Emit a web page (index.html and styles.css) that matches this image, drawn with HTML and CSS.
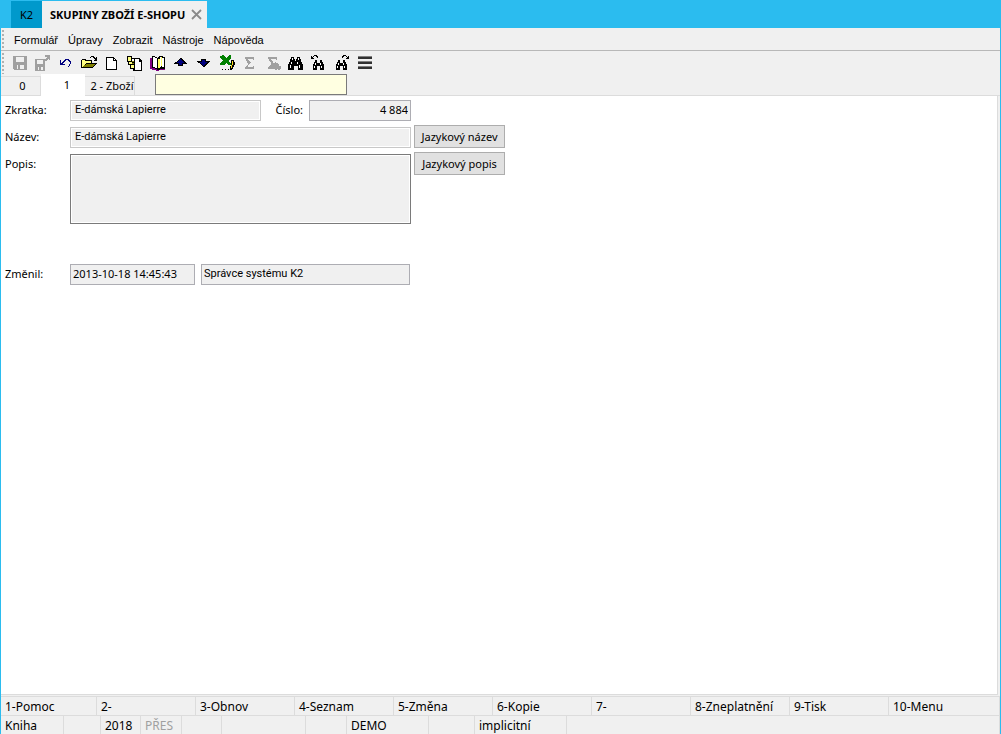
FILE: index.html
```html
<!DOCTYPE html>
<html lang="cs">
<head>
<meta charset="utf-8">
<title>K2 – Skupiny zboží e-shopu</title>
<link rel="stylesheet" href="styles.css">
</head>
<body>
<div class="window">
  <header class="titlebar">
    <button class="title-tab home" type="button">K2</button>
    <div class="title-tab current">
      <span>SKUPINY ZBOŽÍ E-SHOPU</span>
      <button class="close" type="button" aria-label="Zavřít"><svg width="11" height="11" viewBox="0 0 11 11"><path d="M1 1l9 9M10 1l-9 9" stroke="#8a8a8a" stroke-width="1.8" fill="none"/></svg></button>
    </div>
  </header>

  <nav class="menubar">
    <button type="button">Formulář</button>
    <button type="button">Úpravy</button>
    <button type="button">Zobrazit</button>
    <button type="button">Nástroje</button>
    <button type="button">Nápověda</button>
  </nav>

  <div class="toolbar">
    <button type="button" aria-label="Uložit"><svg viewBox="0 0 17 17"><path fill="#a0a0a0" d="M1 2h14v14H2l-1-1z"/><path fill="#f0f0f0" d="M4 3h8v5H4zM5 11h7v4H5z"/><path fill="#a0a0a0" d="M6 11h2v4H6z"/></svg></button>
    <button type="button" aria-label="Uložit a zavřít"><svg viewBox="0 0 17 17"><path fill="#a0a0a0" d="M0 5h10v12H0zM10 1h5v5h-1V5h-1v1h-1v1h-2V5h1V4h1V3h-2z"/><path fill="#f0f0f0" d="M2 6h6v4H2zM3 13h5v3H3z"/><path fill="#a0a0a0" d="M4 13h2v3H4z"/></svg></button>
    <button type="button" aria-label="Zpět"><svg viewBox="0 0 17 17"><path fill="#000080" d="M2 6h1v3h1V8h1V7h1V6h1V5h4v1h1v1h1v3h-1v2h-1v1h-1v-1h1v-2h1V8h-1V7h-1V6H8v1H7v1H6v1H5v1h2v1H2z"/></svg></button>
    <button type="button" aria-label="Otevřít"><svg viewBox="0 0 17 17"><path fill="#000" d="M9 3h1V2h3v1h1v1h1V3h1v4h-3V6h1V5h-1V4h-1V3h-2v1H9zM1 5h4v1h6v3h5v1h-1v1h-1v1h-1v1h-1v1H0V6h1z"/><path fill="#ffff80" d="M1 6h3v1h6v2H5v1H4v1H3v1H2v1H1z"/><path fill="#808000" d="M5 10h9v1h-1v1h-1v1H2v-1h1v-1h2z"/></svg></button>
    <button type="button" aria-label="Nový"><svg viewBox="0 0 17 17"><path fill="#000" d="M2 3h8v1h1v1h1v1h1v10H2z"/><path fill="#fff" d="M3 4h6v3h3v8H3zM10 5h1v1h-1z"/></svg></button>
    <button type="button" aria-label="Kopie"><svg viewBox="0 0 17 17"><path fill="#000" d="M0 2h5v2h8v1h1v1h1v11H6v-2H3v-4H1V8H0z"/><path fill="#ffff80" d="M1 3h3v4H1zM2 8h3v2H2zM4 11h3v3H4z"/><path fill="#fff" d="M5 5h2v2H5zM8 5h4v3h2v8H8z"/><path fill="#000" d="M7 5h1v3H7zM7 10h1v4H7z"/><path fill="#808000" d="M5 7h2v1H5zM5 9h2v1H5z"/></svg></button>
    <button type="button" aria-label="Kniha"><svg viewBox="0 0 17 17"><path fill="#800080" d="M0 4h2v9h5v1h2v-1h6v3H9v1H6v-1H2v-1H0z"/><path fill="#000" d="M2 2h3v1h2v1h1V3h1V2h4v1h2v12h-5v1H7v-1H5v-1H2z"/><path fill="#fff" d="M3 3h2v1h2v10H5v-1H3z"/><path fill="#ffff60" d="M8 5h2v9H8zM11 3h1v9h-1z"/><path fill="#fff" d="M10 3h1v10h-1zM12 4h2v9h-2z"/></svg></button>
    <button type="button" aria-label="Předchozí"><svg viewBox="0 0 17 17"><path fill="#000" d="M7 4h2v1h1v1h1v1h1v1h1v1h1v1h-4v2H5v-2H1V9h1V8h2V7h1V6h1V5h1z"/><path fill="#000080" d="M7 5h1v1h1v1h1v1h1v1H9v2H6V9H4V8h1V7h1V6h1z"/></svg></button>
    <button type="button" aria-label="Další"><svg viewBox="0 0 17 17"><path fill="#000" d="M5 5h5v2h4v1h-1v1h-1v1h-1v1h-1v1H9v1H7v-1H6v-1H5v-1H4V9H2V8H1V7h4z"/><path fill="#000080" d="M6 6h3v2h2v1h-1v1H9v1H8v1H7v-1H6v-1H5V9H4V8h2z"/></svg></button>
    <button type="button" aria-label="Export do Excelu"><svg viewBox="0 0 17 17"><path fill="#008000" d="M1 2l4-1 2 3 3-3h2v3L9 7l3 2v2H9L7 9l-2 2H1V9l3-2-3-3z"/><path fill="#000" d="M3 15h1v1H3zM6 15h1v1H6zM9 15h1v1H9zM12 6h3v2h1v3h-1v2h-1v2h-1v1h-2v-4h1z"/><path fill="#ffe020" d="M13 7h1v4h-1v3h-1v-3h1z"/></svg></button>
    <button type="button" aria-label="Součet"><svg viewBox="0 0 17 17"><path fill="#a0a0a0" d="M3 3h9v3h-1V5H6v1h1v1h1v1h1v1H8v1H7v1H6v2h5v-1h1v3H3v-2h1v-1h1v-1h1V9H5V7H4V5H3z"/></svg></button>
    <button type="button" aria-label="Součet označených"><svg viewBox="0 0 17 17"><path fill="#a0a0a0" d="M3 3h9v3h-1V5H6v1h1v1h1v2h2V8h1v1h2v1h1v2h2v3h-1v1h-2v-1h-1v1h-2v-1h-2v1H8v-1H3v-2h1v-1h1v-1h1V8H5V7H4V5H3z"/></svg></button>
    <button type="button" aria-label="Hledat"><svg viewBox="0 0 17 17"><path fill="#000" d="M3 3h3v2h1v2h1V5h1V3h3v2h1v3h1v2h1v6h-5v-4H6v4H0v-6h1V8h1V5h1z"/><path fill="#fff" d="M4 4h1v2H4zM10 4h1v2h-1zM3 8h1v2H3zM9 8h1v2H9zM2 11h1v3H2zM11 11h1v3h-1z"/></svg></button>
    <button type="button" aria-label="Hledat předchozí"><svg viewBox="0 0 17 17"><path fill="#000" d="M0 2h1v1h1V2h1V1h3v1h1v2H6V3H5V2H3v1H2v1h1v1H0zM4 6h2v3h3V6h2v2h1v2h1v6h-4v-4H6v4H2v-6h1V8h1z"/><path fill="#fff" d="M4 9h1v2H4zM9 9h1v2H9zM3 12h1v2H3zM10 12h1v2h-1z"/></svg></button>
    <button type="button" aria-label="Hledat další"><svg viewBox="0 0 17 17"><path fill="#000" d="M15 2h-1v1h-1V2h-1V1H9v1H8v2h1V3h1V2h2v1h1v1h-1v1h3zM4 6h2v3h3V6h2v2h1v2h1v6H9v-4H6v4H2v-6h1V8h1z"/><path fill="#fff" d="M4 9h1v2H4zM9 9h1v2H9zM3 12h1v2H3zM10 12h1v2h-1z"/></svg></button>
    <button type="button" aria-label="Nabídka"><svg viewBox="0 0 17 17"><path fill="#303030" d="M1 2h14v3H1zM1 7h14v3H1zM1 12h14v3H1z"/><path fill="#808080" d="M1 2h14v1H1zM1 7h14v1H1zM1 12h14v1H1z"/></svg></button>
  </div>

  <div class="pages">
    <button class="page first" type="button">0</button>
    <button class="page active" type="button">1</button>
    <button class="page last" type="button">2 - Zboží</button>
    <input class="search" type="text" aria-label="Rychlé hledání">
  </div>

  <main class="panel">
    <form class="form">
      <label for="zkratka">Zkratka:</label>
      <div class="pair">
        <input id="zkratka" class="field soft" type="text" value="E-dámská Lapierre" readonly>
        <label class="inner" for="cislo">Číslo:</label>
        <input id="cislo" class="field number" type="text" value="4 884" readonly>
      </div>
      <span></span>

      <label for="nazev">Název:</label>
      <input id="nazev" class="field soft" type="text" value="E-dámská Lapierre" readonly>
      <button class="push" type="button">Jazykový název</button>

      <label for="popis">Popis:</label>
      <textarea id="popis" class="field memo" readonly></textarea>
      <button class="push" type="button">Jazykový popis</button>

      <label class="changed" for="zmenil">Změnil:</label>
      <div class="changed author">
        <input id="zmenil" class="field" type="text" value="2013-10-18 14:45:43" readonly>
        <input class="field name" type="text" value="Správce systému K2" aria-label="Změnil – uživatel" readonly>
      </div>
    </form>
  </main>

  <footer class="status">
    <div class="keys">
      <button type="button">1-Pomoc</button>
      <button type="button">2-</button>
      <button type="button">3-Obnov</button>
      <button type="button">4-Seznam</button>
      <button type="button">5-Změna</button>
      <button type="button">6-Kopie</button>
      <button type="button">7-</button>
      <button type="button">8-Zneplatnění</button>
      <button type="button">9-Tisk</button>
      <button type="button">10-Menu</button>
    </div>
    <div class="info">
      <span>Kniha</span><span></span><span>2018</span><span class="off">PŘES</span><span></span><span></span><span></span><span>DEMO</span><span></span><span>implicitní</span><span></span>
    </div>
  </footer>
</div>
</body>
</html>
```
FILE: styles.css
```css
* { box-sizing: border-box; }

body {
  margin: 0;
  font: 11px/14px "Noto Sans", sans-serif;
  color: #000;
}

button, input, textarea {
  margin: 0;
  padding: 0;
  border: 0;
  border-radius: 0;
  background: none;
  font: inherit;
  color: inherit;
  outline: 0;
}

.window {
  display: flex;
  flex-direction: column;
  min-height: 100vh;
  border-left: 1px solid #2bbcef;
  border-right: 1px solid #2bbcef;
  background: #f0f0f0;
}

.titlebar {
  display: flex;
  height: 28px;
  padding: 1px 0 0 10px;
  background: #2bbcef;
}

.title-tab { display: flex; align-items: center; }
.home { width: 31px; justify-content: center; background: #0099cc; }
.current {
  gap: 6px;
  padding: 0 5px 0 8px;
  background: #f0f0f0;
  font-weight: 700;
}
.close { display: flex; }

.menubar, .toolbar {
  background: radial-gradient(circle at 1px 1px, #b0b0b0 1px, transparent 1px) 1px 2px / 3px 4px repeat-y;
}

.menubar {
  display: flex;
  gap: 10px;
  height: 23px;
  padding: 1px 0 0 13px;
  border-bottom: 1px solid #b8b8b8;
  font-family: "Liberation Sans", sans-serif;
}

.toolbar { display: flex; height: 23px; padding-left: 8px; }
.toolbar button { display: grid; place-items: center; width: 23px; height: 23px; }
.toolbar svg { width: 17px; height: 17px; shape-rendering: crispEdges; }

.pages { display: flex; height: 22px; box-shadow: inset 0 -1px #dcdcdc; }
.page { border-top: 1px solid #dcdcdc; border-bottom: 1px solid #dcdcdc; margin-top: 2px; }
.first { width: 40px; padding-left: 4px; border-right: 1px solid #dcdcdc; }
.active { width: 44px; margin-top: 0; padding: 0 0 0 8px; border-color: #fff; background: #fff; }
.last { width: 50px; padding-left: 5px; border-right: 1px solid #dcdcdc; }
.search { width: 192px; height: 21px; margin-left: 20px; padding: 0 4px; border: 1px solid #7a7a7a; background: #ffffe1; }

.panel {
  flex: 1;
  margin-right: 2px;
  padding: 2px 4px 0;
  border-right: 1px solid #dcdcdc;
  border-bottom: 1px solid #dcdcdc;
  background: #fff;
}

.form {
  display: grid;
  grid-template-columns: 62px 341px 91px;
  grid-auto-rows: minmax(27px, auto);
  column-gap: 3px;
  align-items: start;
}
.form label { padding-top: 5px; }
.pair { display: grid; grid-template-columns: 191px 1fr 102px; }
.pair .inner { padding-right: 6px; text-align: right; }
.author { display: grid; grid-template-columns: 125px 209px; gap: 6px; }
.changed { margin-top: 38px; }

.field {
  width: 100%;
  height: 21px;
  margin-top: 2px;
  padding: 0 2px 2px;
  border: 1px solid #adadb3;
  background: #f0f0f0;
}
.soft { padding: 0 4px 2px; border-color: #c8c8c8; box-shadow: inset 0 0 0 1px #fff; }
.soft, .name { font-family: Roboto, sans-serif; }
.number { text-align: right; }
.memo { display: block; height: 70px; border-color: #7a7a7a; box-shadow: inset 0 0 0 1px #fff; resize: none; }
.push { height: 23px; border: 1px solid #adadad; background: #e1e1e1; }

.status { margin-top: 1px; border-top: 1px solid #dcdcdc; font-size: 12px; line-height: 18px; }
.keys { display: grid; grid-template-columns: 96fr repeat(8, 99fr) 111fr; border-bottom: 1px solid #dcdcdc; }
.keys button, .info span { height: 18px; padding: 1px 0 0 4px; border-right: 1px solid #dcdcdc; text-align: left; white-space: nowrap; }
.info { display: grid; grid-template-columns: 63px 37px 40px 41px 40px 84px 41px 82px 46px 92px 1fr; }
.info .off { color: #a0a0a0; }
```
